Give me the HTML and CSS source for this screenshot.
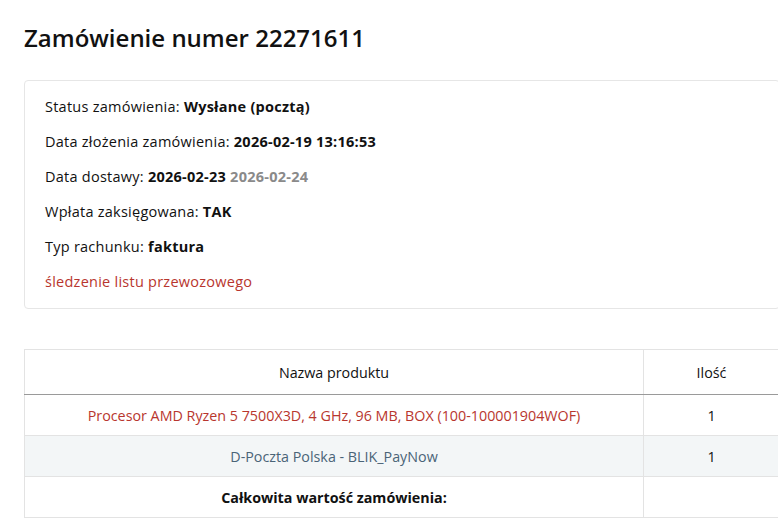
FILE: index.html
```html
<!DOCTYPE html>
<html lang="pl">
<head>
    <meta charset="UTF-8">
    <meta name="viewport" content="width=device-width, initial-scale=1.0">
    <title>Zamówienie numer 22271611</title>
    <link rel="stylesheet" href="styles.css">
</head>
<body>
    <div class="page">
        <h1>Zamówienie numer 22271611</h1>

        <div class="order-box">
            <p>Status zamówienia: <b>Wysłane (pocztą)</b></p>
            <p>Data złożenia zamówienia: <b>2026-02-19 13:16:53</b></p>
            <p>Data dostawy: <b>2026-02-23</b> <b class="muted">2026-02-24</b></p>
            <p>Wpłata zaksięgowana: <b>TAK</b></p>
            <p>Typ rachunku: <b>faktura</b></p>
            <p><a href="#" class="tracking">śledzenie listu przewozowego</a></p>
        </div>

        <table class="items">
            <thead>
                <tr>
                    <th class="col-name">Nazwa produktu</th>
                    <th class="col-qty">Ilość</th>
                </tr>
            </thead>
            <tbody>
                <tr>
                    <td><a href="#" class="product">Procesor AMD Ryzen 5 7500X3D, 4 GHz, 96 MB, BOX (100-100001904WOF)</a></td>
                    <td>1</td>
                </tr>
                <tr class="shipping">
                    <td class="carrier">D-Poczta Polska - BLIK_PayNow</td>
                    <td>1</td>
                </tr>
                <tr>
                    <td><b>Całkowita wartość zamówienia:</b></td>
                    <td></td>
                </tr>
            </tbody>
        </table>
    </div>
</body>
</html>
```

FILE: styles.css
```css
body {
    margin: 0;
    font-family: "Open Sans", sans-serif;
    font-size: 14.5px;
    color: #111;
    background: #fff;
    overflow: hidden;
}
.page {
    width: 756px;
    padding: 24px 0 0 24px;
}
h1 {
    margin: 0 0 28px 0;
    font-size: 24px;
    font-weight: 600;
    line-height: 28px;
}
.order-box {
    border: 1px solid #e6e6e6;
    border-radius: 4px;
    padding: 8px 20px 9px 20px;
    margin-bottom: 40px;
    letter-spacing: 0.25px;
}
.order-box p {
    margin: 0;
    line-height: 35px;
}
.order-box b {
    font-weight: 700;
}
.muted {
    color: #8a8a8a;
}
.tracking {
    color: #b8362e;
    text-decoration: none;
}
.items {
    width: 100%;
    font-size: 14.3px;
    border-collapse: collapse;
    border: 1px solid #e3e3e3;
}
.items th, .items td {
    text-align: center;
    border-left: 1px solid #e3e3e3;
    font-weight: 400;
    height: 40px;
    padding: 0 10px;
}
.items th {
    height: 44px;
    border-bottom: 1px solid #9a9a9a;
}
.items tbody tr + tr td {
    border-top: 1px solid #e3e3e3;
}
.items td b {
    font-weight: 700;
}
.col-name {
    width: 598px;
}
.product {
    color: #b8362e;
    text-decoration: none;
}
.shipping td {
    background: #f3f6f7;
}
.carrier {
    color: #4a6477;
}
```
